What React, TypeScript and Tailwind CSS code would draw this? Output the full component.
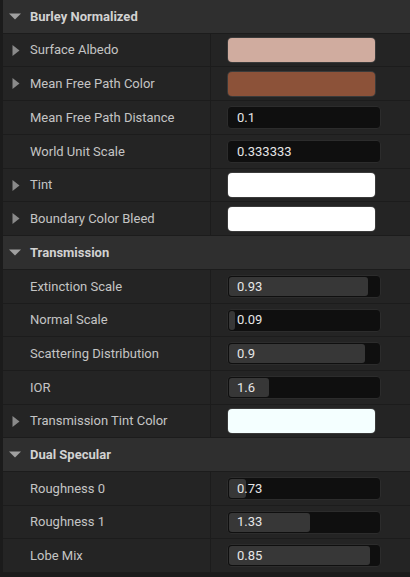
import React from "react";

type Row =
  | { kind: "header"; label: string; h: number }
  | { kind: "color"; label: string; color: string; h: number }
  | { kind: "number"; label: string; value: string; h: number }
  | { kind: "slider"; label: string; value: string; fill: number; h: number };

const rows: Row[] = [
  { kind: "header", label: "Burley Normalized", h: 34 },
  { kind: "color", label: "Surface Albedo", color: "#d0ac9f", h: 33 },
  { kind: "color", label: "Mean Free Path Color", color: "#8c5239", h: 34 },
  { kind: "number", label: "Mean Free Path Distance", value: "0.1", h: 34 },
  { kind: "number", label: "World Unit Scale", value: "0.333333", h: 34 },
  { kind: "color", label: "Tint", color: "#ffffff", h: 33 },
  { kind: "color", label: "Boundary Color Bleed", color: "#ffffff", h: 34 },
  { kind: "header", label: "Transmission", h: 34 },
  { kind: "slider", label: "Extinction Scale", value: "0.93", fill: 139, h: 34 },
  { kind: "slider", label: "Normal Scale", value: "0.09", fill: 6, h: 33 },
  { kind: "slider", label: "Scattering Distribution", value: "0.9", fill: 136, h: 34 },
  { kind: "slider", label: "IOR", value: "1.6", fill: 40, h: 34 },
  { kind: "color", label: "Transmission Tint Color", color: "#f4ffff", h: 33 },
  { kind: "header", label: "Dual Specular", h: 34 },
  { kind: "slider", label: "Roughness 0", value: "0.73", fill: 17, h: 34 },
  { kind: "slider", label: "Roughness 1", value: "1.33", fill: 81, h: 33 },
  { kind: "slider", label: "Lobe Mix", value: "0.85", fill: 141, h: 34 },
];

function RightTri() {
  return (
    <svg width="8" height="11" viewBox="0 0 8 11" className="block">
      <polygon points="0.5,0 7.5,5.5 0.5,11" fill="#8a8a8a" />
    </svg>
  );
}

function DownTri() {
  return (
    <svg width="12" height="7" viewBox="0 0 12 7" className="block">
      <polygon points="0,0.5 12,0.5 6,6.5" fill="#a0a0a0" />
    </svg>
  );
}

function Value({ row }: { row: Row }) {
  if (row.kind === "color") {
    return (
      <div className="w-[149px] h-[26px] rounded-[5px] bg-[#3a3a3a] p-px">
        <div className="w-full h-full rounded-[4px]" style={{ backgroundColor: row.color }} />
      </div>
    );
  }
  if (row.kind === "number") {
    return (
      <div className="w-[154px] h-[23px] rounded-[4px] bg-[#0f0f0f] border border-[#2c2c2c] flex items-center pl-[9px] text-[13px] text-[#e6e6e6]">
        {row.value}
      </div>
    );
  }
  if (row.kind === "slider") {
    return (
      <div className="relative w-[154px] h-[23px] rounded-[4px] bg-[#0f0f0f] border border-[#2c2c2c] flex items-center pl-[9px] text-[13px] text-[#e6e6e6]">
        <div
          className="absolute left-px top-px bottom-px rounded-[3px] bg-[#373737]"
          style={{ width: row.fill }}
        />
        <span className="relative">{row.value}</span>
      </div>
    );
  }
  return null;
}

export default function App() {
  return (
    <div
      className="w-[410px] h-[577px] bg-[#1b1b1b] flex overflow-hidden"
      style={{ fontFamily: "Roboto, 'Liberation Sans', sans-serif" }}
    >
      <div className="w-[3px] shrink-0 bg-[#1b1b1b]" />
      <div className="flex-1 flex flex-col">
        {rows.map((row, i) =>
          row.kind === "header" ? (
            <div
              key={i}
              className="flex items-center bg-[#2f2f2f] border-b border-[#1c1c1c] shrink-0"
              style={{ height: row.h }}
            >
              <div className="w-[27px] pl-[6px] flex items-center">
                <DownTri />
              </div>
              <span className="text-[13px] font-bold text-[#d2d2d2]">{row.label}</span>
            </div>
          ) : (
            <div
              key={i}
              className="flex bg-[#242424] border-b border-[#1c1c1c] shrink-0"
              style={{ height: row.h }}
            >
              <div className="w-[208px] flex items-center border-r border-[#1c1c1c]">
                <div className="w-[27px] pl-[9px] flex items-center">
                  {row.kind === "color" ? <RightTri /> : null}
                </div>
                <span className="text-[13px] text-[#c4c4c4]">{row.label}</span>
              </div>
              <div className="flex-1 flex items-center pl-[16px]">
                <Value row={row} />
              </div>
            </div>
          )
        )}
      </div>
    </div>
  );
}
